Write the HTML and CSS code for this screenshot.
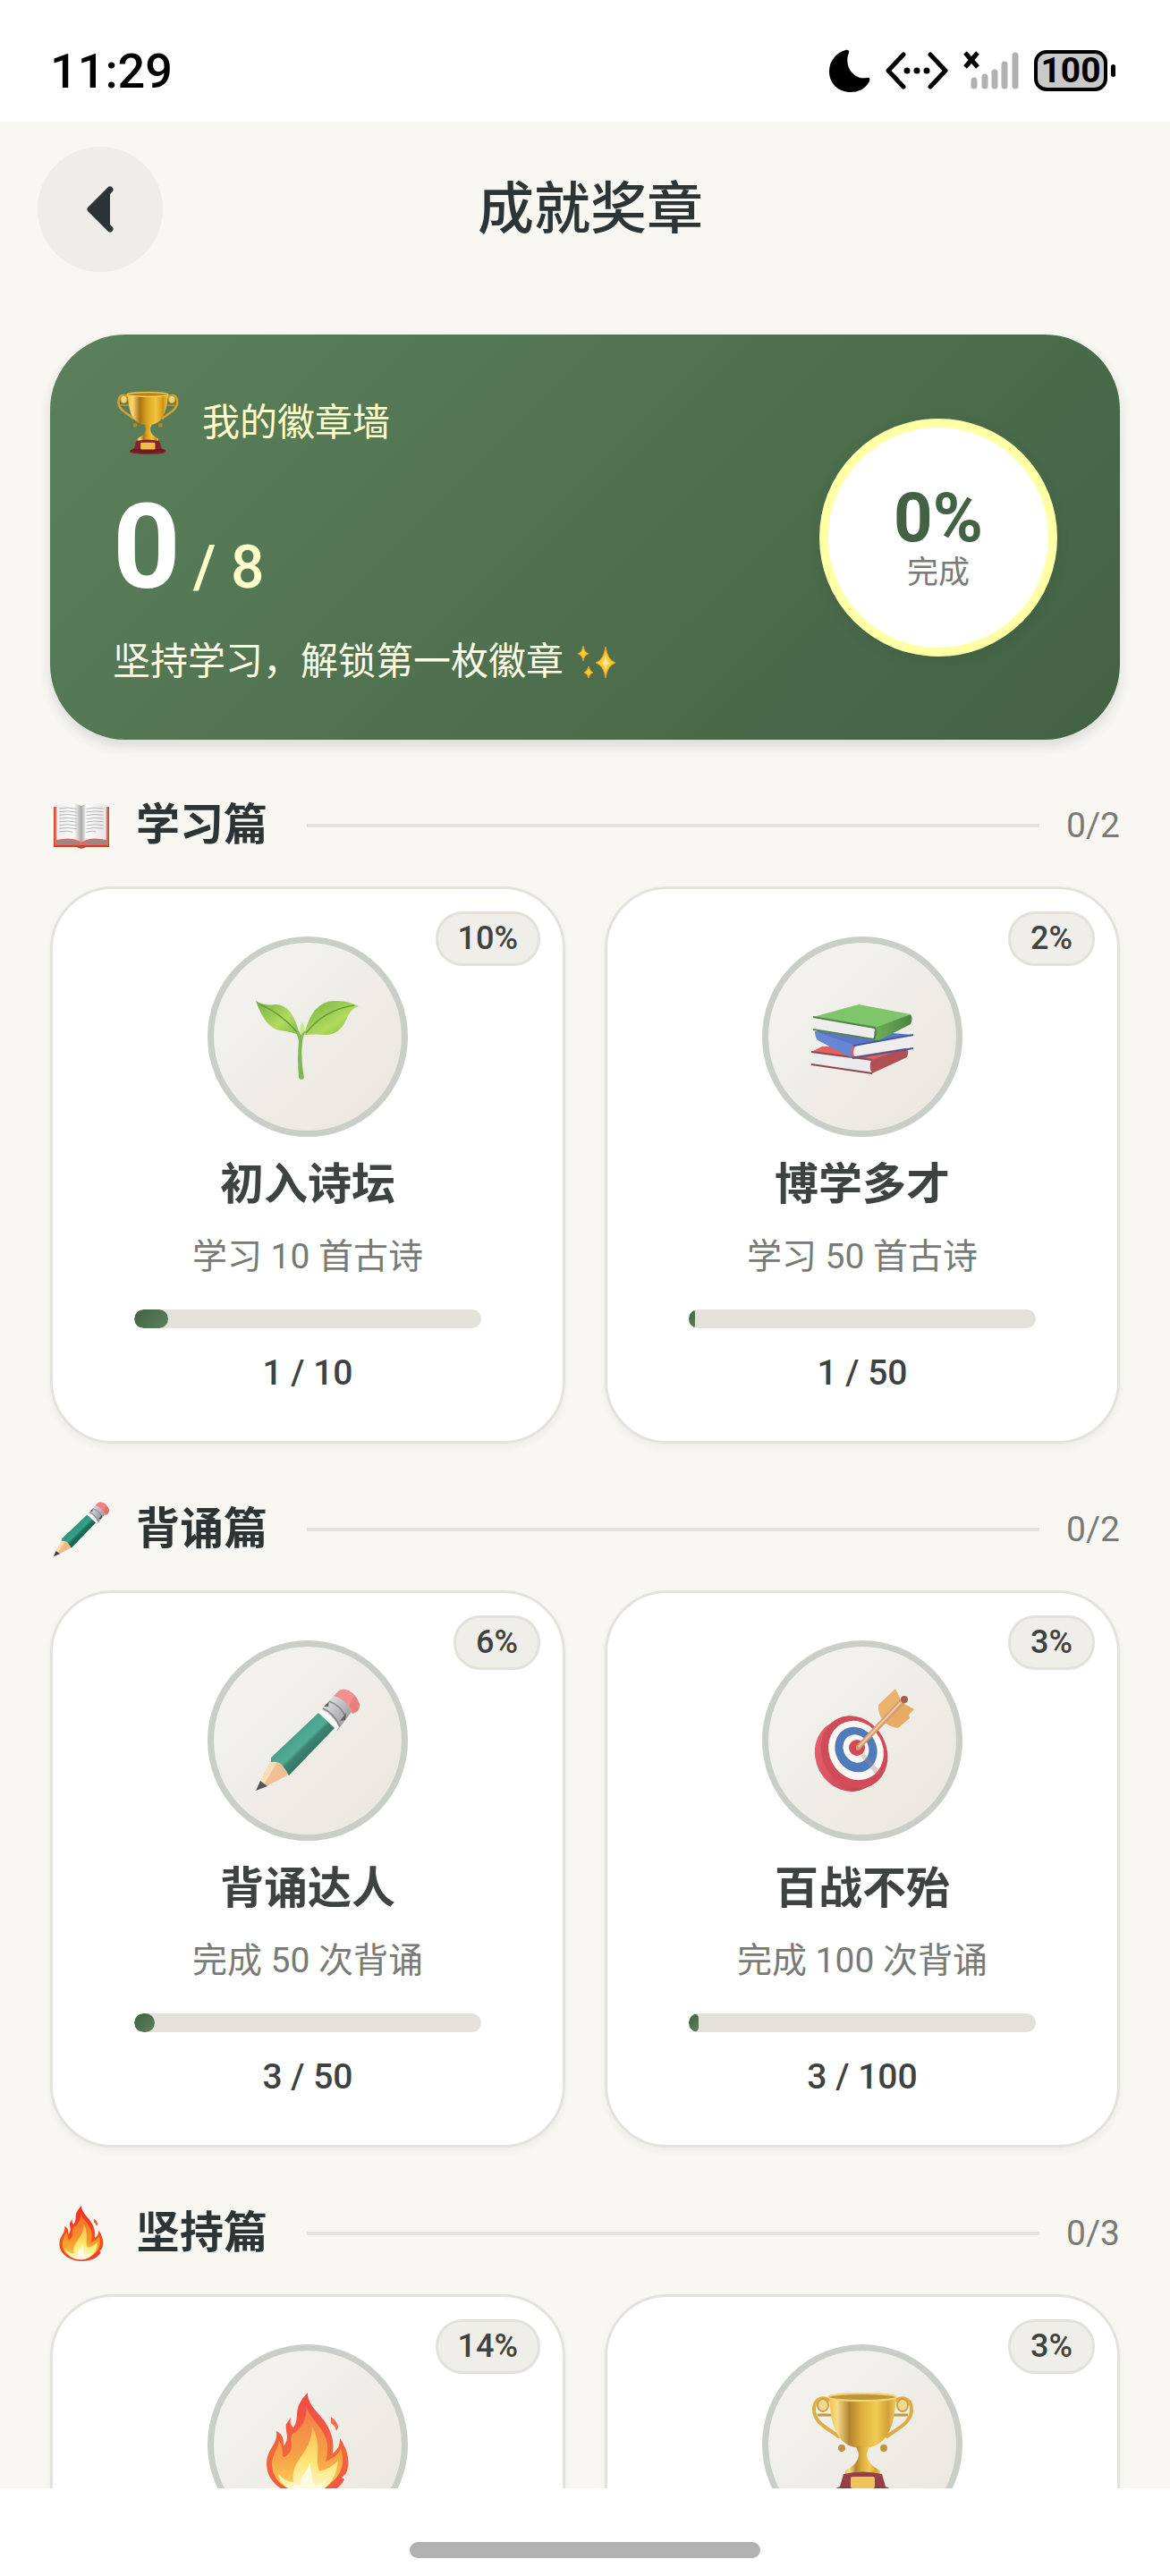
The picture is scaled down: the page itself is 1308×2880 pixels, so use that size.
FILE: index.html
```html
<!DOCTYPE html>
<html lang="zh-CN">

<head>
  <meta charset="UTF-8" />
  <meta name="viewport" content="width=device-width, initial-scale=1.0" />
  <title>成就奖章</title>
  <link rel="stylesheet" href="styles.css">
</head>

<body>
  <!-- Shared icon shapes -->
  <svg class="sprite" aria-hidden="true">
    <defs>
      <linearGradient id="gold" x1="0" x2="1" y1="0" y2="0">
        <stop offset="0" stop-color="#efbd34" />
        <stop offset="0.12" stop-color="#f8d978" />
        <stop offset="0.3" stop-color="#a87312" />
        <stop offset="0.48" stop-color="#dba321" />
        <stop offset="0.7" stop-color="#f2c63a" />
        <stop offset="0.88" stop-color="#cf931c" />
        <stop offset="1" stop-color="#efc84e" />
      </linearGradient>
      <linearGradient id="leaf" x1="0" x2="1" y1="0" y2="1">
        <stop offset="0" stop-color="#5fa32a" />
        <stop offset="0.6" stop-color="#a6d845" />
        <stop offset="1" stop-color="#6cb32c" />
      </linearGradient>
      <linearGradient id="page-left" x1="0" x2="1" y1="0" y2="0">
        <stop offset="0" stop-color="#ececec" />
        <stop offset="0.7" stop-color="#fdfdfd" />
        <stop offset="1" stop-color="#a9a9a9" />
      </linearGradient>
      <linearGradient id="page-right" x1="0" x2="1" y1="0" y2="0">
        <stop offset="0" stop-color="#a9a9a9" />
        <stop offset="0.2" stop-color="#fdfdfd" />
        <stop offset="1" stop-color="#e6e6e6" />
      </linearGradient>
      <linearGradient id="pencil-body" x1="0.3" x2="0.7" y1="0.3" y2="0.7">
        <stop offset="0" stop-color="#2b8f76" />
        <stop offset="0.5" stop-color="#35a188" />
        <stop offset="0.6" stop-color="#1d715c" />
        <stop offset="1" stop-color="#175646" />
      </linearGradient>
      <linearGradient id="metal" x1="0" x2="1" y1="0" y2="1">
        <stop offset="0" stop-color="#f2f2f2" />
        <stop offset="0.5" stop-color="#b5b5b9" />
        <stop offset="1" stop-color="#77777c" />
      </linearGradient>
      <linearGradient id="spine-green" x1="0" x2="1" y1="0" y2="0">
        <stop offset="0" stop-color="#5aa544" />
        <stop offset="1" stop-color="#2f7425" />
      </linearGradient>
      <linearGradient id="red-rim" x1="0" x2="1" y1="0" y2="1">
        <stop offset="0" stop-color="#ee4a5f" />
        <stop offset="1" stop-color="#a81f2a" />
      </linearGradient>
      <linearGradient id="flame" x1="0" x2="0" y1="0" y2="1">
        <stop offset="0" stop-color="#ef2b2b" />
        <stop offset="0.6" stop-color="#f4511e" />
        <stop offset="1" stop-color="#f03a2a" />
      </linearGradient>
      <linearGradient id="flame-mid" x1="0" x2="0" y1="0" y2="1">
        <stop offset="0" stop-color="#f26a2e" />
        <stop offset="0.6" stop-color="#f9962a" />
        <stop offset="1" stop-color="#ffd23c" />
      </linearGradient>
      <linearGradient id="flame-core" x1="0" x2="0" y1="0" y2="1">
        <stop offset="0" stop-color="#fbb53a" />
        <stop offset="0.55" stop-color="#ffe765" />
        <stop offset="1" stop-color="#fffbd0" />
      </linearGradient>
    </defs>

    <symbol id="trophy" viewBox="0 0 116 116">
      <path d="M22 9C12 3 4 8 4 19c0 15 16 21 29 31" fill="none" stroke="#d8a32b" stroke-width="4" />
      <path d="M95 9c10-6 18-1 18 10 0 15-16 21-29 31" fill="none" stroke="#d8a32b" stroke-width="4" />
      <path d="M8 25h18M91 25h18" stroke="#c08a1d" stroke-width="3" />
      <ellipse cx="14" cy="14" rx="6" ry="7" fill="#f3d67c" stroke="#c9952a" stroke-width="2" />
      <ellipse cx="103" cy="14" rx="6" ry="7" fill="#f3d67c" stroke="#c9952a" stroke-width="2" />
      <path d="M21 6c2 22 4 56 37 56S94 28 96 6z" fill="url(#gold)" />
      <ellipse cx="58" cy="5" rx="38" ry="4" fill="#b9831c" stroke="#f4cf5a" stroke-width="2" />
      <circle cx="35" cy="62" r="4" fill="#b9841c" />
      <circle cx="82" cy="62" r="4" fill="#b9841c" />
      <path d="M51 60h15l-3 8c0 8 5 14 15 19v4H39v-4c10-5 15-11 15-19z" fill="url(#gold)" />
      <path d="M37 91q21-5 43 0l4 14c4 2 8 3 8 6 0 7-67 7-67 0 0-3 4-4 8-6z" fill="#84242b" />
      <ellipse cx="58" cy="109" rx="32" ry="4" fill="#5d151b" opacity="0.6" />
      <rect x="45" y="94" width="27" height="13" rx="2" fill="#f1bd42" />
    </symbol>

    <symbol id="book" viewBox="0 0 116 116">
      <path d="M0 19h54l4 5 4-5h54v84H68q-10 6-20 0H0z" fill="#c8402f" />
      <path d="M2 21h112v78H2z" fill="#e7695a" />
      <path d="M5 92q30-10 48 4h10q18-14 48-4v4H68q-10 5-20 0H5z" fill="#8d8d8d" />
      <path d="M6 15q33-8 52 2v76q-19-13-52-5z" fill="url(#page-left)" />
      <path d="M58 17q19-10 52-2v73q-33-8-52 5z" fill="url(#page-right)" />
      <g fill="none" stroke="#a4a4a4" stroke-width="1.5">
        <path d="M12 22q20-3 36 1M12 29q20-3 36 1M12 36q20-3 36 1M12 43q20-3 36 1M12 50q20-3 36 1M12 57q20-3 36 1M12 64q20-3 36 1M12 71q20-3 28 1" />
        <path d="M68 23q16-4 36-1M68 30q16-4 36-1M68 37q16-4 36-1M68 44q16-4 36-1M68 51q16-4 36-1M68 58q16-4 36-1M68 65q16-4 36-1M68 72q16-4 20-1" />
      </g>
    </symbol>

    <symbol id="pencil" viewBox="0 0 116 116">
      <path d="M4 105L18 79l11 5 8 12-25 13z" fill="#f1b987" />
      <path d="M4 105L18 79l6 3-15 25z" fill="#fbdcae" />
      <path d="M0 114l5-11 8 6z" fill="#3d3d42" />
      <path d="M17 77L70 27l18 17-51 53q-3-6-8-12-4-4-12-3z" fill="url(#pencil-body)" />
      <path d="M70 27L87 8q14 2 20 18L91 47q-8-14-21-20z" fill="url(#metal)" />
      <path d="M75 22q12 5 19 20M82 14q13 5 19 18" fill="none" stroke="#77777c" stroke-width="1.5" />
      <path d="M76 20l6-6-1 6zM94 36l7-9-1 8z" fill="#4a4a4e" />
      <path d="M70 27l3-4q13 6 20 20l-3 4q-8-14-20-20z" fill="#fafafa" />
      <path d="M87 8l6-6q4-3 11 0 9 5 12 15 0 5-3 8l-5 3Q102 12 87 8z" fill="#f28080" />
      <path d="M110 8q5 6 6 10 0 5-3 8l-5 2q-1-5-4-9z" fill="#de6060" opacity="0.6" />
    </symbol>

    <symbol id="seedling" viewBox="0 0 116 116">
      <path d="M50 54c-1-7 0-9 2-12 3 5 3 9 1 14z" fill="#bfe57a" />
      <path d="M46 50q6 5 6 14-2 20 2 40-3 4-6 0-2-22 0-40-1-8-4-11zM58 50q-5 4-6 14l-2-4q1-8 8-10z" fill="#6fae3a" />
      <path d="M0 18q10 6 21 4 20-1 28 34-12-4-22-5Q11 49 0 18z" fill="url(#leaf)" />
      <path d="M4 22q22 8 42 31" fill="none" stroke="#4f9124" stroke-width="1.5" />
      <path d="M54 56q9-38 34-38 14-1 27 6-9 2-14 15-7 17-23 17-11-1-24 0z" fill="url(#leaf)" />
      <path d="M56 54q20-26 54-31" fill="none" stroke="#4f9124" stroke-width="1.5" />
    </symbol>

    <symbol id="books" viewBox="0 0 116 116">
      <path d="M1 75l12-6 90-1 6 5-40 11z" fill="#de4a44" />
      <path d="M4 77l64 7v14L4 88z" fill="#ecebee" />
      <path d="M68 84l38-13q5 2 2 10L69 99q-4-6-1-15z" fill="#a7353b" />
      <path d="M1 75l68 9M1 89l68 10" stroke="#7d2d36" stroke-width="2" fill="none" />
      <path d="M5 52l50-1 60 5-67 13z" fill="#3e62c4" />
      <path d="M5 52l43 15q-4 7-1 15L8 62q-3-4-3-10z" fill="#4e76d0" />
      <path d="M50 69l62-11q-2 6 0 12L49 80q-2-6 1-11z" fill="#eeeef2" />
      <path d="M48 68l67-12M47 82l68-11" stroke="#2c3f86" stroke-width="2" fill="none" />
      <path d="M3 36l51-14 58 11-39 16z" fill="#6bbf56" />
      <path d="M6 39l64 11q3 5 0 11L6 51z" fill="#eeedf0" />
      <path d="M72 48l40-15q3 5 0 11L77 62l-7-1q4-6 2-13z" fill="url(#spine-green)" />
      <path d="M3 36l69 12q3 6-1 13L3 50" fill="none" stroke="#3d6d35" stroke-width="2" />
    </symbol>

    <symbol id="target" viewBox="0 0 116 116">
      <ellipse cx="42" cy="75" rx="36" ry="41" transform="rotate(-28 42 75)" fill="url(#red-rim)" />
      <ellipse cx="49" cy="71" rx="36" ry="42" transform="rotate(-28 49 71)" fill="#cc2f41" />
      <ellipse cx="51" cy="69" rx="30" ry="34" transform="rotate(-28 51 69)" fill="#fdfaf7" />
      <ellipse cx="51" cy="68" rx="23" ry="26" transform="rotate(-28 51 68)" fill="#3568b4" />
      <ellipse cx="51" cy="67" rx="14" ry="16" transform="rotate(-28 51 67)" fill="#fdfaf7" />
      <ellipse cx="52" cy="66" rx="9" ry="9" fill="#cf2d3d" />
      <path d="M56 75l18 22 4-4-17-20z" fill="#8d7a77" opacity="0.35" />
      <path d="M76 18L95 0l7 14-20 23q-7-9-6-19z" fill="#e9aa58" />
      <path d="M83 38l20-22 13 7-6 6 1 4-13 11q-8-1-15-6z" fill="#e6a04e" />
      <path d="M51 68q-1-3 1-5l51-54 5 5-53 54q-2 2-4 0z" fill="#cf9059" />
      <path d="M54 65l50-53" stroke="#f2c597" stroke-width="2" />
      <circle cx="105" cy="12" r="4" fill="#8e4b37" />
    </symbol>

    <symbol id="fire" viewBox="0 0 116 116">
      <path d="M58 0c-1 14 16 25 22 37 7 13 7 22 6 31 6-5 8-9 8-17 9 13 12 27 7 39l-5 5 3 2C93 110 76 116 59 116 34 116 12 101 12 80c0-18 13-21 11-37 8 4 8 10 8 17 8-10 1-17 3-25l5-7c-1 6 0 9 3 11 9-14-3-19 16-39z" fill="url(#flame)" />
      <path d="M84 27q8 6 8 12l-2 4q-1-6-6-9z" fill="#ec5a34" />
      <path d="M56 14c4 16 22 26 24 44 1 9-1 15-2 19 9-4 14-8 17-14 6 18-2 30-9 36-8 9-17 13-28 13-22 0-40-13-40-32 0-10 7-18 8-26 7 10 1 18 6 18 14-8 4-17 9-26 8-4 18-17 15-32z" fill="url(#flame-mid)" />
      <path d="M63 38c12 23 2 34 8 50 9-2 16-7 21-12-2 20-12 35-33 37-17 0-31-8-34-22q9 9 17 9c-3-28 20-29 21-62z" fill="url(#flame-core)" />
      <path d="M60 78c4 12 0 20 8 26 4-1 8-4 11-7-3 9-10 15-20 15s-16-4-20-11q6 3 11 2c-1-11 9-14 10-25z" fill="#fffde0" />
    </symbol>

    <symbol id="sparkles" viewBox="0 0 44 38">
      <g fill="#fcc92f" stroke="#e79a2b" stroke-width="1">
        <path d="M32 2q2 15 11 18-9 3-11 17-2-14-11-17 9-3 11-18z" />
        <path d="M7 1q1 7 6 9-5 1-6 8-1-7-6-8 5-2 6-9z" />
        <path d="M13 24q1 5 5 7-4 1-5 6-1-5-5-6 4-2 5-7z" />
      </g>
      <path d="M32 11q1 8 5 9-4 2-5 9-1-7-5-9 4-1 5-9z" fill="#ffe58c" />
    </symbol>
  </svg>

  <div class="status-bar">
    <span class="time">11:29</span>
    <div class="status-icons">
      <svg width="46" height="48" viewBox="0 0 46 48">
        <path d="M18 1c3-1 5 1 4 3-6 14 5 31 20 28 3-1 4 1 3 4-5 9-13 12-21 12C10 48 0 38 0 25 0 13 8 4 18 1z" />
      </svg>
      <svg width="70" height="44" viewBox="0 0 70 44">
        <path d="M20 4L3 22l17 18M50 4l17 18-17 18" fill="none" stroke="#000" stroke-width="5" stroke-linecap="round" stroke-linejoin="round" />
        <circle cx="24" cy="22" r="3.5" />
        <circle cx="35" cy="22" r="3.5" />
        <circle cx="46" cy="22" r="3.5" />
      </svg>
      <svg width="62" height="44" viewBox="0 0 62 44">
        <path d="M2 2l14 16M16 2L2 18" stroke="#000" stroke-width="5" />
        <path d="M12 33v6M24 29v10M35 24v15M46 15v24M58 5v34" stroke="#b1b1b1" stroke-width="7" stroke-linecap="round" />
      </svg>
      <div class="battery">
        <span class="battery-level">100</span>
        <span class="battery-tip"></span>
      </div>
    </div>
  </div>

  <div class="header">
    <button class="back-button" aria-label="返回">
      <svg width="32" height="54" viewBox="0 0 32 54">
        <path d="M27 5L5 27l22 22" fill="#2d3436" stroke="#2d3436" stroke-width="7" stroke-linecap="round" stroke-linejoin="round" />
      </svg>
    </button>
    <h1 class="title">成就奖章</h1>
  </div>

  <main class="content">
    <div class="summary">
      <div class="summary-info">
        <div class="summary-label">
          <svg class="summary-icon"><use href="#trophy" /></svg>
          <span>我的徽章墙</span>
        </div>
        <div class="summary-count">
          <span class="unlocked">0</span>
          <span class="total">/ 8</span>
        </div>
        <div class="summary-tip">
          <span>坚持学习，解锁第一枚徽章</span>
          <svg class="sparkles"><use href="#sparkles" /></svg>
        </div>
      </div>
      <div class="ring">
        <span class="ring-percent">0%</span>
        <span class="ring-text">完成</span>
      </div>
    </div>

    <section class="section">
      <div class="section-header">
        <svg class="section-icon"><use href="#book" /></svg>
        <h2 class="section-title">学习篇</h2>
        <div class="section-line"></div>
        <span class="section-count">0/2</span>
      </div>
      <div class="cards">
        <div class="card">
          <span class="badge">10%</span>
          <div class="medal"><svg class="medal-icon"><use href="#seedling" /></svg></div>
          <h3 class="card-title">初入诗坛</h3>
          <p class="card-desc">学习 10 首古诗</p>
          <div class="bar"><div class="bar-fill" style="width: 10%"></div></div>
          <p class="card-count">1 / 10</p>
        </div>
        <div class="card">
          <span class="badge">2%</span>
          <div class="medal"><svg class="medal-icon"><use href="#books" /></svg></div>
          <h3 class="card-title">博学多才</h3>
          <p class="card-desc">学习 50 首古诗</p>
          <div class="bar"><div class="bar-fill" style="width: 2%"></div></div>
          <p class="card-count">1 / 50</p>
        </div>
      </div>
    </section>

    <section class="section">
      <div class="section-header">
        <svg class="section-icon"><use href="#pencil" /></svg>
        <h2 class="section-title">背诵篇</h2>
        <div class="section-line"></div>
        <span class="section-count">0/2</span>
      </div>
      <div class="cards">
        <div class="card">
          <span class="badge">6%</span>
          <div class="medal"><svg class="medal-icon"><use href="#pencil" /></svg></div>
          <h3 class="card-title">背诵达人</h3>
          <p class="card-desc">完成 50 次背诵</p>
          <div class="bar"><div class="bar-fill" style="width: 6%"></div></div>
          <p class="card-count">3 / 50</p>
        </div>
        <div class="card">
          <span class="badge">3%</span>
          <div class="medal"><svg class="medal-icon"><use href="#target" /></svg></div>
          <h3 class="card-title">百战不殆</h3>
          <p class="card-desc">完成 100 次背诵</p>
          <div class="bar"><div class="bar-fill" style="width: 3%"></div></div>
          <p class="card-count">3 / 100</p>
        </div>
      </div>
    </section>

    <section class="section">
      <div class="section-header">
        <svg class="section-icon"><use href="#fire" /></svg>
        <h2 class="section-title">坚持篇</h2>
        <div class="section-line"></div>
        <span class="section-count">0/3</span>
      </div>
      <div class="cards">
        <div class="card">
          <span class="badge">14%</span>
          <div class="medal"><svg class="medal-icon"><use href="#fire" /></svg></div>
        </div>
        <div class="card">
          <span class="badge">3%</span>
          <div class="medal"><svg class="medal-icon"><use href="#trophy" /></svg></div>
        </div>
      </div>
    </section>
  </main>

  <div class="nav-bar">
    <div class="nav-handle"></div>
  </div>
</body>

</html>
```

FILE: styles.css
```css
/* Reset */
* {
  box-sizing: border-box;
}

h1,
h2,
h3,
p {
  margin: 0;
}

svg {
  display: block;
}

body {
  height: 100vh;
  margin: 0;
  display: flex;
  flex-direction: column;
  overflow: hidden;
  font-family: Roboto, "Noto Sans CJK SC", sans-serif;
  background-color: #f8f7f2;
  color: #2d3436;
}

.sprite {
  position: absolute;
  width: 0;
  height: 0;
}

/* Status bar */
.status-bar {
  flex: none;
  height: 136px;
  padding: 22px 61px 0 56px;
  display: flex;
  align-items: center;
  justify-content: space-between;
  background-color: white;
  color: black;
}

.time {
  font-size: 54px;
  font-weight: 500;
}

.status-icons {
  display: flex;
  align-items: center;
  gap: 17px;
}

.battery {
  display: flex;
  align-items: center;
  gap: 4px;
}

.battery-level {
  width: 82px;
  height: 46px;
  border: 4px solid black;
  border-radius: 14px;
  background-color: #c9c9c9;
  font-size: 39px;
  font-weight: 700;
  line-height: 38px;
  text-align: center;
}

.battery-tip {
  width: 5px;
  height: 14px;
  border-radius: 3px;
  background-color: black;
}

/* Header */
.header {
  flex: none;
  display: flex;
  align-items: center;
  padding: 28px 170px 0 42px;
}

.back-button {
  width: 140px;
  height: 140px;
  padding: 0;
  border: none;
  border-radius: 50%;
  display: flex;
  align-items: center;
  justify-content: center;
  background-color: #eeede9;
  cursor: pointer;
}

.title {
  flex: 1;
  font-size: 63px;
  font-weight: 500;
  line-height: 72px;
  text-align: center;
}

/* Scrolling content */
.content {
  flex: 1;
  min-height: 0;
  overflow: hidden;
  padding: 70px 56px 0;
}

/* Summary */
.summary {
  display: flex;
  align-items: center;
  justify-content: space-between;
  padding: 58px 70px 57px;
  border-radius: 84px;
  background: linear-gradient(135deg, #5c805c, #426243);
  box-shadow: 0 7px 14px rgba(45, 52, 54, 0.14);
}

.summary-info {
  display: flex;
  flex-direction: column;
  gap: 32px;
}

.summary-label {
  display: flex;
  align-items: center;
  gap: 26px;
  height: 82px;
  padding-left: 4px;
  font-size: 42px;
  line-height: 60px;
  color: #ffffcc;
}

.summary-icon {
  width: 70px;
  height: 70px;
}

.summary-count {
  display: flex;
  align-items: baseline;
  gap: 14px;
}

.unlocked {
  font-size: 132px;
  font-weight: 700;
  line-height: 132px;
  color: white;
}

.total {
  font-size: 66px;
  font-weight: 500;
  line-height: 66px;
  color: #ffffcc;
}

.summary-tip {
  display: flex;
  align-items: center;
  gap: 15px;
  font-size: 42px;
  line-height: 60px;
  color: #fffde6;
}

.sparkles {
  width: 44px;
  height: 38px;
}

.ring {
  width: 266px;
  height: 266px;
  border: 10px solid #ffffa5;
  border-radius: 50%;
  display: flex;
  flex-direction: column;
  align-items: center;
  justify-content: center;
  background-color: white;
  box-shadow: 0 4px 14px rgba(45, 52, 54, 0.12);
}

.ring-percent {
  font-size: 76px;
  font-weight: 700;
  line-height: 80px;
  color: #426243;
}

.ring-text {
  font-size: 35px;
  line-height: 44px;
  color: #787a78;
}

/* Sections */
.section-header {
  display: flex;
  align-items: center;
  gap: 30px;
  height: 72px;
  margin: 60px 0 32px;
  padding-left: 4px;
}

.section-icon {
  width: 62px;
  height: 62px;
}

.section-title {
  margin-right: 14px;
  font-size: 49px;
  font-weight: 700;
  line-height: 60px;
}

.section-line {
  flex: 1;
  height: 4px;
  background-color: #e3e2dc;
}

.section-count {
  font-size: 39px;
  line-height: 48px;
  color: #787a75;
}

/* Cards */
.cards {
  display: grid;
  grid-template-columns: 1fr 1fr;
  gap: 44px;
}

.card {
  position: relative;
  display: flex;
  flex-direction: column;
  align-items: center;
  padding: 53px 42px 52px;
  border: 3px solid #e3e2db;
  border-radius: 70px;
  background-color: white;
  box-shadow: 0 4px 8px rgba(45, 52, 54, 0.05);
}

.badge {
  position: absolute;
  top: 25px;
  right: 25px;
  padding: 0 22px;
  border: 3px solid #e3e1da;
  border-radius: 30px;
  background-color: #f0eee8;
  font-size: 36px;
  font-weight: 500;
  line-height: 55px;
  color: #3e4240;
}

.medal {
  width: 224px;
  height: 224px;
  border: 7px solid #c9cec6;
  border-radius: 50%;
  display: flex;
  align-items: center;
  justify-content: center;
  background: linear-gradient(135deg, #f5f4f0, #eae6df);
}

.medal-icon {
  width: 116px;
  height: 116px;
  opacity: 0.85;
}

.card-title {
  margin-top: 24px;
  font-size: 49px;
  font-weight: 700;
  line-height: 60px;
  color: #3e4240;
}

.card-desc {
  margin-top: 26px;
  font-size: 39px;
  line-height: 48px;
  color: #787a75;
}

.bar {
  width: 80%;
  height: 21px;
  margin-top: 35px;
  border-radius: 11px;
  overflow: hidden;
  background-color: #e3e1d9;
}

.bar-fill {
  height: 100%;
  border-radius: 11px;
  background: linear-gradient(135deg, #426243, #5c805c);
}

.card-count {
  margin-top: 26px;
  font-size: 39px;
  font-weight: 500;
  line-height: 48px;
  color: #3e4240;
}

/* Gesture bar */
.nav-bar {
  flex: none;
  height: 98px;
  padding-top: 60px;
  background-color: white;
}

.nav-handle {
  width: 30%;
  height: 18px;
  margin: 0 auto;
  border-radius: 9px;
  background-color: #b1b1b1;
}
```
